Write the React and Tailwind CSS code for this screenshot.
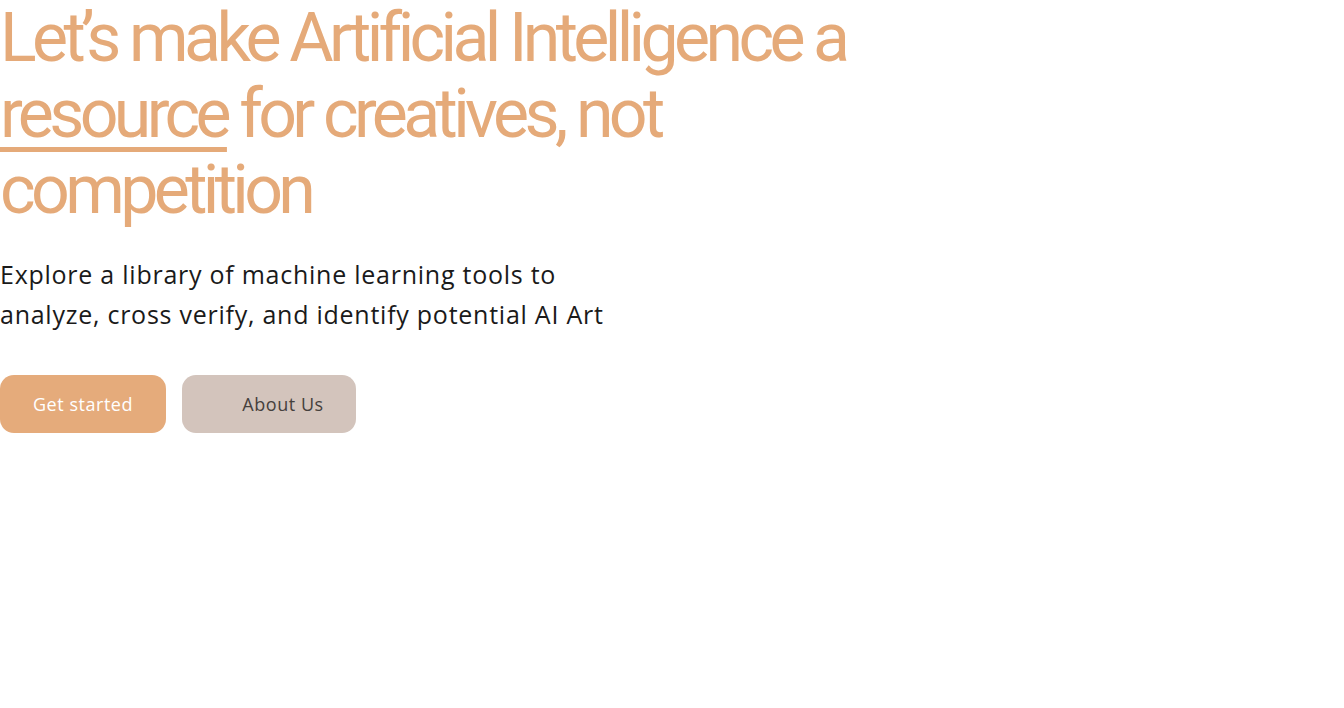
import React from "react";

export default function App() {
  return (
    <div className="min-h-[708px] w-full bg-white">
      <div className="flex flex-col">
        <h1 className="w-[870px] font-['Roboto',sans-serif] text-[68px] leading-[76px] font-normal tracking-[-0.068em] text-[#e5aa79]">
          Let’s make Artificial Intelligence a{" "}
          <span className="underline decoration-[5px] underline-offset-[10px] decoration-[#e5aa79]">resource</span>{" "}
          for creatives, not competition
        </h1>
        <p className="mt-[26px] w-[640px] font-['Open_Sans',sans-serif] text-[25px] leading-[40px] tracking-[0.03em] text-[#1a1a1a]">
          Explore a library of machine learning tools to
          <br />
          analyze, cross verify, and identify potential AI Art
        </p>
        <div className="mt-[41px] flex gap-4">
          <button className="h-[58px] w-[166px] rounded-[14px] bg-[#e5ab7b] font-['Open_Sans',sans-serif] text-[18px] font-medium tracking-[0.03em] text-white">
            Get started
          </button>
          <button className="h-[58px] w-[174px] rounded-[14px] bg-[#d3c4bc] pl-[28px] font-['Open_Sans',sans-serif] text-[18px] font-medium tracking-[0.03em] text-[#45403d]">
            About Us
          </button>
        </div>
      </div>
    </div>
  );
}
